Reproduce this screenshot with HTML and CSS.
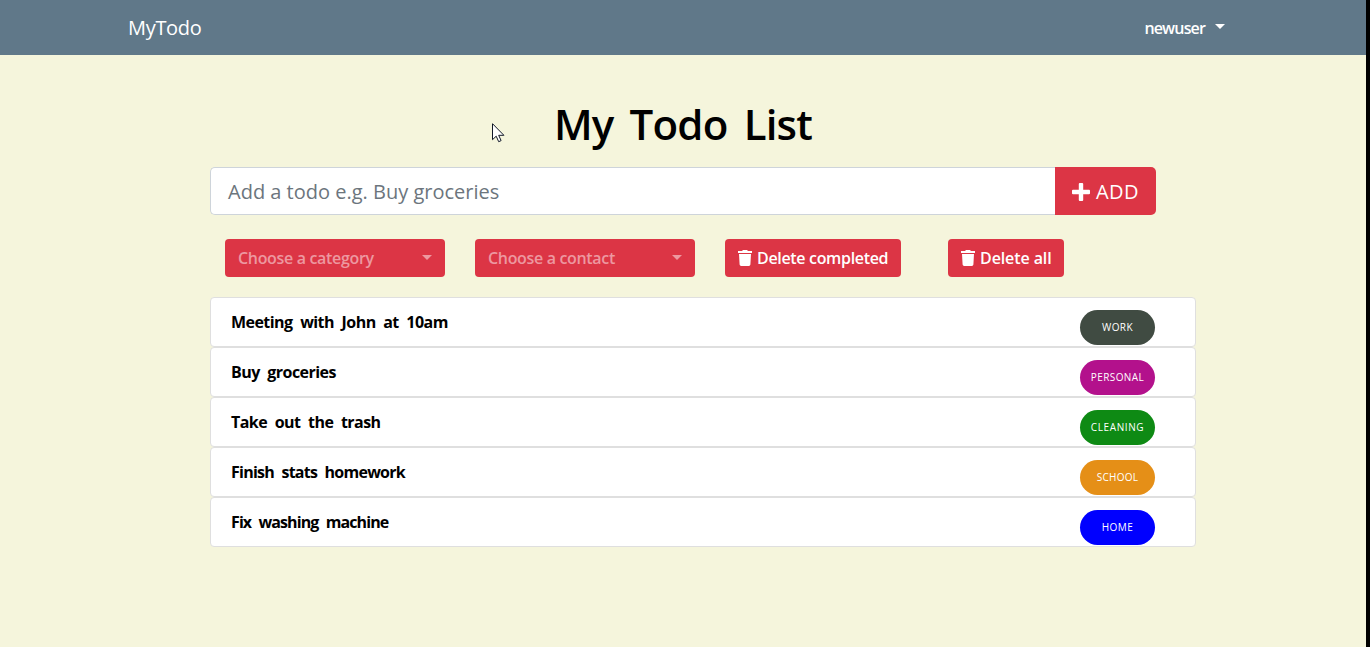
FILE: index.html
```html
<!DOCTYPE html>
<html lang="en">
<head>
<meta charset="utf-8">
<title>MyTodo</title>
<link rel="stylesheet" href="styles.css">
</head>
<body>
<nav class="navbar">
  <a class="brand">MyTodo</a>
  <a class="user"><span>newuser</span><i class="caret"></i></a>
</nav>
<main class="content">
  <h1 class="title"><span>My Todo List</span></h1>
  <form class="add-form">
    <div class="field"><span>Add a todo e.g. Buy groceries</span></div>
    <button type="button" class="add-button"><svg width="18" height="18" viewBox="0 0 18 18"><path d="M7.800 0h2.400q1 0 1 1v5.800H17q1 0 1 1v2.400q0 1-1 1h-5.800V17q0 1-1 1H7.800q-1 0-1-1v-5.800H1q-1 0-1-1V7.800q0-1 1-1h5.800V1q0-1 1-1z"/></svg><span>ADD</span></button>
  </form>
  <div class="filters">
    <div class="button select"><span>Choose a category</span><i class="caret"></i></div>
    <div class="button select"><span>Choose a contact</span><i class="caret"></i></div>
    <div class="button delete completed"><svg width="14" height="16" viewBox="0 0 14 16"><path d="M0 1h4.200l.6-1h4.400l.6 1H14v2H0zM1 4h12l-.6 10.600q-.1 1.400-1.500 1.400H3.100q-1.400 0-1.500-1.400z"/></svg><span>Delete completed</span></div>
    <div class="button delete all"><svg width="14" height="16" viewBox="0 0 14 16"><path d="M0 1h4.200l.6-1h4.400l.6 1H14v2H0zM1 4h12l-.6 10.600q-.1 1.400-1.500 1.400H3.100q-1.400 0-1.500-1.400z"/></svg><span>Delete all</span></div>
  </div>
  <ul class="todos">
    <li><span class="task">Meeting with John at 10am</span><span class="badge work">WORK</span></li>
    <li><span class="task">Buy groceries</span><span class="badge personal">PERSONAL</span></li>
    <li><span class="task">Take out the trash</span><span class="badge cleaning">CLEANING</span></li>
    <li><span class="task tight">Finish stats homework</span><span class="badge school">SCHOOL</span></li>
    <li><span class="task tighter">Fix washing machine</span><span class="badge home">HOME</span></li>
  </ul>
</main>
<svg class="cursor" width="13" height="20" viewBox="0 0 13 20"><path d="M.5.7v16l3.700-3.500 2.500 5.500 2.400-1.100-2.400-5.300h5.200z"/></svg>
</body>
</html>
```
FILE: styles.css
```css
* { box-sizing: border-box; }
body {
  margin: 0;
  height: 647px;
  overflow: hidden;
  border-right: 4px solid #000;
  background: #f5f5dc;
  color: #000;
  font: 16px/24px "Comic Sans MS", "Open Sans", sans-serif;
}
span { white-space: nowrap; }
svg { flex: none; fill: currentColor; }
.navbar {
  display: flex;
  align-items: center;
  justify-content: space-between;
  height: 55px;
  padding: 0 141px 0 128px;
  background: #607889;
  color: #fff;
}
.brand { font-size: 20px; font-weight: 500; letter-spacing: -.3px; }
.user { display: flex; align-items: center; font-weight: 600; letter-spacing: -.85px; }
.caret {
  flex: none;
  border: 5px solid transparent;
  border-top-color: currentColor;
  border-bottom: 0;
}
.user .caret { margin: -2px 0 0 10px; }
.content { width: 986px; margin-left: 210px; }
.title {
  width: 946px;
  height: 112px;
  margin: 0;
  padding-top: 45px;
  text-align: center;
  font-size: 42px;
  line-height: 48px;
  font-weight: 600;
  letter-spacing: -.8px;
  word-spacing: 6px;
}
.add-form { display: flex; width: 946px; height: 48px; }
.field {
  flex: 1;
  display: flex;
  align-items: center;
  padding: 1px 0 0 17px;
  border: 1px solid #ced4da;
  border-right: 0;
  border-radius: 5px 0 0 5px;
  background: #fff;
  color: #6c757d;
  font-size: 20px;
}
.add-button {
  display: flex;
  align-items: center;
  gap: 6px;
  width: 101px;
  padding: 1px 0 0 17px;
  border: 0;
  border-radius: 0 5px 5px 0;
  background: #dc3545;
  color: #fff;
  font: inherit;
  font-size: 20px;
  letter-spacing: .4px;
}
.filters { display: flex; height: 82px; padding: 24px 0 20px 15px; }
.button {
  display: flex;
  align-items: center;
  height: 38px;
  padding: 0 13px;
  border-radius: 4px;
  background: #dc3545;
  color: #fff;
  font-weight: 600;
  letter-spacing: -.33px;
}
.select {
  justify-content: space-between;
  width: 220px;
  margin-right: 30px;
  color: #ed98a0;
}
.select .caret { margin-top: -2px; }
.delete { gap: 5px; }
.completed { width: 176px; margin-right: 47px; }
.all { width: 116px; letter-spacing: -.1px; }
.todos { margin: 0; padding: 0; list-style: none; }
.todos li {
  display: flex;
  justify-content: space-between;
  height: 50px;
  padding: 12px 40px 0 20px;
  border: 1px solid #dfdfdf;
  border-radius: 4px;
  background: #fff;
}
.task { font-weight: 700; letter-spacing: -.55px; word-spacing: 4px; }
.tight { letter-spacing: -.75px; }
.tighter { letter-spacing: -.9px; }
.badge {
  display: flex;
  align-items: center;
  justify-content: center;
  width: 75px;
  height: 35px;
  padding-bottom: 2px;
  border-radius: 18px;
  color: #fff;
  font-size: 10px;
  font-weight: 500;
  letter-spacing: .4px;
}
.work { background: #404b42; }
.personal { background: #b3118c; }
.cleaning { background: #0e8a14; letter-spacing: .6px; }
.school { background: #e58f17; letter-spacing: .3px; }
.home { background: #00f; }
.cursor {
  position: absolute;
  left: 492px;
  top: 123px;
  fill: #fff;
  stroke: #111827;
}
```
